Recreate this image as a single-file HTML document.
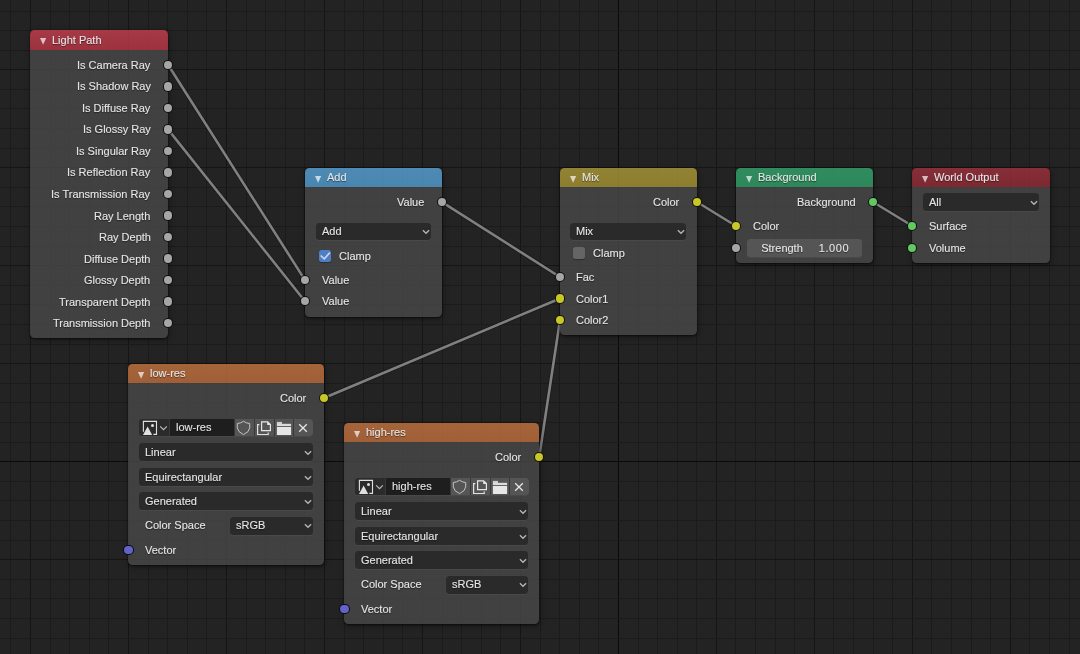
<!DOCTYPE html><html><head><meta charset="utf-8"><style>
html,body{margin:0;padding:0;}
.t{will-change:transform;-webkit-text-stroke:0.2px rgba(230,230,230,0.6);}
body{width:1080px;height:654px;overflow:hidden;position:relative;background:#232323;font-family:"Liberation Sans",sans-serif;}
.t{position:absolute;white-space:nowrap;line-height:normal;font-size:11px;text-shadow:0 1px 1px rgba(0,0,0,0.5);}
.bd{position:absolute;left:0;right:0;bottom:0;background:rgba(72,72,72,0.8);}
.node{position:absolute;border-radius:4.5px;box-shadow:0 0 1px rgba(0,0,0,0.7),0 1px 2px rgba(0,0,0,0.45),1px 2px 6px rgba(0,0,0,0.35);overflow:hidden;}
.hd{position:absolute;left:0;top:0;right:0;}
.sk{position:absolute;width:10.4px;height:10.4px;border-radius:50%;box-sizing:border-box;border:1px solid rgba(0,0,0,0.9);}
.tri,.ic{position:absolute;overflow:visible;}
.dd{position:absolute;border-radius:3.5px;box-shadow:0 1px 0 rgba(255,255,255,0.045);}
.cb{position:absolute;width:12px;height:12px;border-radius:2.5px;box-shadow:0 1px 1px rgba(0,0,0,0.3);}
svg.full{position:absolute;left:0;top:0;}
</style></head><body>
<svg class="full" width="1080" height="654" viewBox="0 0 1080 654" shape-rendering="crispEdges"><rect x="10" y="0" width="1" height="654" fill="#1b1b1b"/><rect x="30" y="0" width="1" height="654" fill="#151515"/><rect x="50" y="0" width="1" height="654" fill="#1b1b1b"/><rect x="69" y="0" width="1" height="654" fill="#1b1b1b"/><rect x="89" y="0" width="1" height="654" fill="#1b1b1b"/><rect x="108" y="0" width="1" height="654" fill="#1b1b1b"/><rect x="128" y="0" width="1" height="654" fill="#151515"/><rect x="148" y="0" width="1" height="654" fill="#1b1b1b"/><rect x="167" y="0" width="1" height="654" fill="#1b1b1b"/><rect x="187" y="0" width="1" height="654" fill="#1b1b1b"/><rect x="206" y="0" width="1" height="654" fill="#1b1b1b"/><rect x="226" y="0" width="1" height="654" fill="#151515"/><rect x="246" y="0" width="1" height="654" fill="#1b1b1b"/><rect x="265" y="0" width="1" height="654" fill="#1b1b1b"/><rect x="285" y="0" width="1" height="654" fill="#1b1b1b"/><rect x="304" y="0" width="1" height="654" fill="#1b1b1b"/><rect x="324" y="0" width="1" height="654" fill="#151515"/><rect x="344" y="0" width="1" height="654" fill="#1b1b1b"/><rect x="363" y="0" width="1" height="654" fill="#1b1b1b"/><rect x="383" y="0" width="1" height="654" fill="#1b1b1b"/><rect x="402" y="0" width="1" height="654" fill="#1b1b1b"/><rect x="422" y="0" width="1" height="654" fill="#151515"/><rect x="442" y="0" width="1" height="654" fill="#1b1b1b"/><rect x="461" y="0" width="1" height="654" fill="#1b1b1b"/><rect x="481" y="0" width="1" height="654" fill="#1b1b1b"/><rect x="500" y="0" width="1" height="654" fill="#1b1b1b"/><rect x="520" y="0" width="1" height="654" fill="#151515"/><rect x="540" y="0" width="1" height="654" fill="#1b1b1b"/><rect x="559" y="0" width="1" height="654" fill="#1b1b1b"/><rect x="579" y="0" width="1" height="654" fill="#1b1b1b"/><rect x="598" y="0" width="1" height="654" fill="#1b1b1b"/><rect x="618" y="0" width="1" height="654" fill="#0b0b0b"/><rect x="638" y="0" width="1" height="654" fill="#1b1b1b"/><rect x="657" y="0" width="1" height="654" fill="#1b1b1b"/><rect x="677" y="0" width="1" height="654" fill="#1b1b1b"/><rect x="696" y="0" width="1" height="654" fill="#1b1b1b"/><rect x="716" y="0" width="1" height="654" fill="#151515"/><rect x="735" y="0" width="1" height="654" fill="#1b1b1b"/><rect x="755" y="0" width="1" height="654" fill="#1b1b1b"/><rect x="775" y="0" width="1" height="654" fill="#1b1b1b"/><rect x="794" y="0" width="1" height="654" fill="#1b1b1b"/><rect x="814" y="0" width="1" height="654" fill="#151515"/><rect x="833" y="0" width="1" height="654" fill="#1b1b1b"/><rect x="853" y="0" width="1" height="654" fill="#1b1b1b"/><rect x="873" y="0" width="1" height="654" fill="#1b1b1b"/><rect x="892" y="0" width="1" height="654" fill="#1b1b1b"/><rect x="912" y="0" width="1" height="654" fill="#151515"/><rect x="931" y="0" width="1" height="654" fill="#1b1b1b"/><rect x="951" y="0" width="1" height="654" fill="#1b1b1b"/><rect x="971" y="0" width="1" height="654" fill="#1b1b1b"/><rect x="990" y="0" width="1" height="654" fill="#1b1b1b"/><rect x="1010" y="0" width="1" height="654" fill="#151515"/><rect x="1029" y="0" width="1" height="654" fill="#1b1b1b"/><rect x="1049" y="0" width="1" height="654" fill="#1b1b1b"/><rect x="1069" y="0" width="1" height="654" fill="#1b1b1b"/><rect x="0" y="11" width="1080" height="1" fill="#1b1b1b"/><rect x="0" y="30" width="1080" height="1" fill="#1b1b1b"/><rect x="0" y="50" width="1080" height="1" fill="#1b1b1b"/><rect x="0" y="69" width="1080" height="1" fill="#151515"/><rect x="0" y="89" width="1080" height="1" fill="#1b1b1b"/><rect x="0" y="108" width="1080" height="1" fill="#1b1b1b"/><rect x="0" y="128" width="1080" height="1" fill="#1b1b1b"/><rect x="0" y="148" width="1080" height="1" fill="#1b1b1b"/><rect x="0" y="167" width="1080" height="1" fill="#151515"/><rect x="0" y="187" width="1080" height="1" fill="#1b1b1b"/><rect x="0" y="206" width="1080" height="1" fill="#1b1b1b"/><rect x="0" y="226" width="1080" height="1" fill="#1b1b1b"/><rect x="0" y="246" width="1080" height="1" fill="#1b1b1b"/><rect x="0" y="265" width="1080" height="1" fill="#151515"/><rect x="0" y="285" width="1080" height="1" fill="#1b1b1b"/><rect x="0" y="304" width="1080" height="1" fill="#1b1b1b"/><rect x="0" y="324" width="1080" height="1" fill="#1b1b1b"/><rect x="0" y="344" width="1080" height="1" fill="#1b1b1b"/><rect x="0" y="363" width="1080" height="1" fill="#151515"/><rect x="0" y="383" width="1080" height="1" fill="#1b1b1b"/><rect x="0" y="402" width="1080" height="1" fill="#1b1b1b"/><rect x="0" y="422" width="1080" height="1" fill="#1b1b1b"/><rect x="0" y="442" width="1080" height="1" fill="#1b1b1b"/><rect x="0" y="461" width="1080" height="1" fill="#0b0b0b"/><rect x="0" y="481" width="1080" height="1" fill="#1b1b1b"/><rect x="0" y="500" width="1080" height="1" fill="#1b1b1b"/><rect x="0" y="520" width="1080" height="1" fill="#1b1b1b"/><rect x="0" y="540" width="1080" height="1" fill="#1b1b1b"/><rect x="0" y="559" width="1080" height="1" fill="#151515"/><rect x="0" y="579" width="1080" height="1" fill="#1b1b1b"/><rect x="0" y="598" width="1080" height="1" fill="#1b1b1b"/><rect x="0" y="618" width="1080" height="1" fill="#1b1b1b"/><rect x="0" y="638" width="1080" height="1" fill="#1b1b1b"/></svg>
<svg class="full" width="1080" height="654" viewBox="0 0 1080 654"><line x1="168" y1="64.8" x2="305" y2="280.1" stroke="rgba(0,0,0,0.25)" stroke-width="4.2"/><line x1="168" y1="64.8" x2="305" y2="280.1" stroke="#808080" stroke-width="2.6"/><line x1="168" y1="129.4" x2="305" y2="301.2" stroke="rgba(0,0,0,0.25)" stroke-width="4.2"/><line x1="168" y1="129.4" x2="305" y2="301.2" stroke="#808080" stroke-width="2.6"/><line x1="442" y1="202.2" x2="560" y2="277" stroke="rgba(0,0,0,0.25)" stroke-width="4.2"/><line x1="442" y1="202.2" x2="560" y2="277" stroke="#808080" stroke-width="2.6"/><line x1="324" y1="398" x2="560" y2="298.5" stroke="rgba(0,0,0,0.25)" stroke-width="4.2"/><line x1="324" y1="398" x2="560" y2="298.5" stroke="#808080" stroke-width="2.6"/><line x1="539.2" y1="457" x2="560" y2="320" stroke="rgba(0,0,0,0.25)" stroke-width="4.2"/><line x1="539.2" y1="457" x2="560" y2="320" stroke="#808080" stroke-width="2.6"/><line x1="697" y1="202" x2="736" y2="226" stroke="rgba(0,0,0,0.25)" stroke-width="4.2"/><line x1="697" y1="202" x2="736" y2="226" stroke="#808080" stroke-width="2.6"/><line x1="873" y1="202" x2="912.5" y2="226" stroke="rgba(0,0,0,0.25)" stroke-width="4.2"/><line x1="873" y1="202" x2="912.5" y2="226" stroke="#808080" stroke-width="2.6"/></svg>
<div class="node" style="left:30px;top:30px;width:138px;height:308.4px"><div class="hd" style="height:20px;background:linear-gradient(rgba(199,64,80,0.8),rgba(186,54,69,0.8))"></div><div class="bd" style="top:20px"></div></div>
<svg class="tri" style="left:40.00px;top:38.20px" width="7" height="7" viewBox="0 0 7 7"><path d="M0 0.1 L6.2 0.1 L3.1 6.7 Z" fill="rgba(255,255,255,0.68)"/></svg>
<div class="t" style="left:51.80px;top:34.00px;color:#e6e6e6;font-size:11px;text-shadow:0 1px 1px rgba(0,0,0,0.55)">Light Path</div>
<div class="t" style="right:929.50px;top:58.80px;color:#e6e6e6;font-size:11px;">Is Camera Ray</div>
<div class="sk" style="left:162.80px;top:59.60px;background:#a6a6a6"></div>
<div class="t" style="right:929.50px;top:80.33px;color:#e6e6e6;font-size:11px;">Is Shadow Ray</div>
<div class="sk" style="left:162.80px;top:81.13px;background:#a6a6a6"></div>
<div class="t" style="right:929.50px;top:101.86px;color:#e6e6e6;font-size:11px;">Is Diffuse Ray</div>
<div class="sk" style="left:162.80px;top:102.66px;background:#a6a6a6"></div>
<div class="t" style="right:929.50px;top:123.39px;color:#e6e6e6;font-size:11px;">Is Glossy Ray</div>
<div class="sk" style="left:162.80px;top:124.19px;background:#a6a6a6"></div>
<div class="t" style="right:929.50px;top:144.92px;color:#e6e6e6;font-size:11px;">Is Singular Ray</div>
<div class="sk" style="left:162.80px;top:145.72px;background:#a6a6a6"></div>
<div class="t" style="right:929.50px;top:166.45px;color:#e6e6e6;font-size:11px;">Is Reflection Ray</div>
<div class="sk" style="left:162.80px;top:167.25px;background:#a6a6a6"></div>
<div class="t" style="right:929.50px;top:187.98px;color:#e6e6e6;font-size:11px;">Is Transmission Ray</div>
<div class="sk" style="left:162.80px;top:188.78px;background:#a6a6a6"></div>
<div class="t" style="right:929.50px;top:209.51px;color:#e6e6e6;font-size:11px;">Ray Length</div>
<div class="sk" style="left:162.80px;top:210.31px;background:#a6a6a6"></div>
<div class="t" style="right:929.50px;top:231.04px;color:#e6e6e6;font-size:11px;">Ray Depth</div>
<div class="sk" style="left:162.80px;top:231.84px;background:#a6a6a6"></div>
<div class="t" style="right:929.50px;top:252.57px;color:#e6e6e6;font-size:11px;">Diffuse Depth</div>
<div class="sk" style="left:162.80px;top:253.37px;background:#a6a6a6"></div>
<div class="t" style="right:929.50px;top:274.10px;color:#e6e6e6;font-size:11px;">Glossy Depth</div>
<div class="sk" style="left:162.80px;top:274.90px;background:#a6a6a6"></div>
<div class="t" style="right:929.50px;top:295.63px;color:#e6e6e6;font-size:11px;">Transparent Depth</div>
<div class="sk" style="left:162.80px;top:296.43px;background:#a6a6a6"></div>
<div class="t" style="right:929.50px;top:317.16px;color:#e6e6e6;font-size:11px;">Transmission Depth</div>
<div class="sk" style="left:162.80px;top:317.96px;background:#a6a6a6"></div>
<div class="node" style="left:305px;top:168px;width:137px;height:148.60000000000002px"><div class="hd" style="height:19px;background:linear-gradient(rgba(89,164,216,0.8),rgba(81,159,211,0.8))"></div><div class="bd" style="top:19px"></div></div>
<svg class="tri" style="left:315.00px;top:175.50px" width="7" height="7" viewBox="0 0 7 7"><path d="M0 0.1 L6.2 0.1 L3.1 6.7 Z" fill="rgba(255,255,255,0.68)"/></svg>
<div class="t" style="left:326.80px;top:171.30px;color:#e6e6e6;font-size:11px;text-shadow:0 1px 1px rgba(0,0,0,0.55)">Add</div>
<div class="t" style="right:655.50px;top:196.20px;color:#e6e6e6;font-size:11px;">Value</div>
<div class="sk" style="left:436.80px;top:197.00px;background:#a6a6a6"></div>
<div class="dd" style="left:316px;top:223px;width:115px;height:17px;background:#2a2a2a"></div>
<div class="t" style="left:322.00px;top:225.10px;color:#e6e6e6;font-size:11px;">Add</div>
<svg class="ic" style="left:420.70px;top:228.00px" width="10" height="8" viewBox="0 0 10 8"><path d="M1.9 2.3 L5 5.3 L8.1 2.2" fill="none" stroke="#b4b4b4" stroke-width="1.4"/></svg>
<div class="cb" style="left:319px;top:250px;background:#4e7ec4"></div>
<svg class="ic" style="left:319px;top:250px" width="12" height="12" viewBox="0 0 12 12"><path d="M1.6 5.5 L5.3 8.9 L10.8 2.6" fill="none" stroke="rgba(235,240,250,0.78)" stroke-width="1.6"/></svg>
<div class="t" style="left:338.80px;top:250.00px;color:#e6e6e6;font-size:11px;">Clamp</div>
<div class="t" style="left:321.80px;top:274.10px;color:#e6e6e6;font-size:11px;">Value</div>
<div class="sk" style="left:299.80px;top:274.90px;background:#a6a6a6"></div>
<div class="t" style="left:321.80px;top:295.20px;color:#e6e6e6;font-size:11px;">Value</div>
<div class="sk" style="left:299.80px;top:296.00px;background:#a6a6a6"></div>
<div class="node" style="left:560px;top:168px;width:137px;height:167px"><div class="hd" style="height:19px;background:linear-gradient(rgba(174,154,56,0.8),rgba(166,148,51,0.8))"></div><div class="bd" style="top:19px"></div></div>
<svg class="tri" style="left:570.00px;top:175.50px" width="7" height="7" viewBox="0 0 7 7"><path d="M0 0.1 L6.2 0.1 L3.1 6.7 Z" fill="rgba(255,255,255,0.68)"/></svg>
<div class="t" style="left:581.80px;top:171.30px;color:#e6e6e6;font-size:11px;text-shadow:0 1px 1px rgba(0,0,0,0.55)">Mix</div>
<div class="t" style="right:400.50px;top:196.00px;color:#e6e6e6;font-size:11px;">Color</div>
<div class="sk" style="left:691.80px;top:196.80px;background:#c7c729"></div>
<div class="dd" style="left:570px;top:223px;width:116px;height:17px;background:#2a2a2a"></div>
<div class="t" style="left:576.00px;top:225.10px;color:#e6e6e6;font-size:11px;">Mix</div>
<svg class="ic" style="left:675.70px;top:228.00px" width="10" height="8" viewBox="0 0 10 8"><path d="M1.9 2.3 L5 5.3 L8.1 2.2" fill="none" stroke="#b4b4b4" stroke-width="1.4"/></svg>
<div class="cb" style="left:573px;top:247px;background:#656565"></div>
<div class="t" style="left:592.80px;top:247.30px;color:#e6e6e6;font-size:11px;">Clamp</div>
<div class="t" style="left:575.80px;top:271.00px;color:#e6e6e6;font-size:11px;">Fac</div>
<div class="sk" style="left:554.80px;top:271.80px;background:#a6a6a6"></div>
<div class="t" style="left:575.80px;top:292.50px;color:#e6e6e6;font-size:11px;">Color1</div>
<div class="sk" style="left:554.80px;top:293.30px;background:#c7c729"></div>
<div class="t" style="left:575.80px;top:314.00px;color:#e6e6e6;font-size:11px;">Color2</div>
<div class="sk" style="left:554.80px;top:314.80px;background:#c7c729"></div>
<div class="node" style="left:736px;top:168px;width:137px;height:95px"><div class="hd" style="height:19px;background:linear-gradient(rgba(51,166,109,0.8),rgba(48,160,104,0.8))"></div><div class="bd" style="top:19px"></div></div>
<svg class="tri" style="left:746.00px;top:175.50px" width="7" height="7" viewBox="0 0 7 7"><path d="M0 0.1 L6.2 0.1 L3.1 6.7 Z" fill="rgba(255,255,255,0.68)"/></svg>
<div class="t" style="left:757.80px;top:171.30px;color:#e6e6e6;font-size:11px;text-shadow:0 1px 1px rgba(0,0,0,0.55)">Background</div>
<div class="t" style="right:224.50px;top:196.00px;color:#e6e6e6;font-size:11px;">Background</div>
<div class="sk" style="left:867.80px;top:196.80px;background:#63c763"></div>
<div class="t" style="left:752.80px;top:220.00px;color:#e6e6e6;font-size:11px;">Color</div>
<div class="sk" style="left:730.80px;top:220.80px;background:#c7c729"></div>
<div class="dd" style="left:747px;top:239px;width:115px;height:18px;background:#555555"></div>
<div class="t" style="left:682.00px;width:200px;text-align:center;top:242.20px;color:#e6e6e6;font-size:11px;">Strength</div>
<div class="t" style="left:734.00px;width:200px;text-align:center;top:242.20px;color:#e6e6e6;font-size:11px;letter-spacing:0.6px">1.000</div>
<div class="sk" style="left:730.80px;top:242.80px;background:#a6a6a6"></div>
<div class="node" style="left:912px;top:168px;width:138px;height:95px"><div class="hd" style="height:19px;background:linear-gradient(rgba(159,50,61,0.8),rgba(148,41,54,0.8))"></div><div class="bd" style="top:19px"></div></div>
<svg class="tri" style="left:922.00px;top:175.50px" width="7" height="7" viewBox="0 0 7 7"><path d="M0 0.1 L6.2 0.1 L3.1 6.7 Z" fill="rgba(255,255,255,0.68)"/></svg>
<div class="t" style="left:933.80px;top:171.30px;color:#e6e6e6;font-size:11px;text-shadow:0 1px 1px rgba(0,0,0,0.55)">World Output</div>
<div class="dd" style="left:923px;top:193px;width:116px;height:18px;background:#2a2a2a"></div>
<div class="t" style="left:929.00px;top:195.60px;color:#e6e6e6;font-size:11px;">All</div>
<svg class="ic" style="left:1028.70px;top:198.50px" width="10" height="8" viewBox="0 0 10 8"><path d="M1.9 2.3 L5 5.3 L8.1 2.2" fill="none" stroke="#b4b4b4" stroke-width="1.4"/></svg>
<div class="t" style="left:928.60px;top:220.00px;color:#e6e6e6;font-size:11px;">Surface</div>
<div class="sk" style="left:907.10px;top:220.80px;background:#63c763"></div>
<div class="t" style="left:928.60px;top:242.00px;color:#e6e6e6;font-size:11px;">Volume</div>
<div class="sk" style="left:907.10px;top:242.80px;background:#63c763"></div>
<div class="node" style="left:128px;top:364px;width:196px;height:201px"><div class="hd" style="height:19px;background:linear-gradient(rgba(198,116,64,0.8),rgba(191,110,60,0.8))"></div><div class="bd" style="top:19px"></div></div>
<svg class="tri" style="left:138.00px;top:371.50px" width="7" height="7" viewBox="0 0 7 7"><path d="M0 0.1 L6.2 0.1 L3.1 6.7 Z" fill="rgba(255,255,255,0.68)"/></svg>
<div class="t" style="left:149.80px;top:367.30px;color:#e6e6e6;font-size:11px;text-shadow:0 1px 1px rgba(0,0,0,0.55)">low-res</div>
<div class="t" style="right:773.50px;top:392.00px;color:#e6e6e6;font-size:11px;">Color</div>
<div class="sk" style="left:318.80px;top:392.80px;background:#c7c729"></div>
<div class="dd" style="left:139px;top:419px;width:174px;height:17px;background:#383838;border-radius:3.5px"></div>
<div class="dd" style="left:139px;top:419px;width:30px;height:17px;background:#2b2b2b;border-radius:3.5px 0 0 3.5px;box-shadow:none"></div>
<div class="dd" style="left:170px;top:419px;width:64px;height:17px;background:#1e1e1e;border-radius:0;box-shadow:none"></div>
<div class="dd" style="left:235px;top:419px;width:19px;height:17px;background:#555555;border-radius:0;box-shadow:none"></div>
<div class="dd" style="left:255px;top:419px;width:19px;height:17px;background:#555555;border-radius:0;box-shadow:none"></div>
<div class="dd" style="left:275px;top:419px;width:18px;height:17px;background:#555555;border-radius:0;box-shadow:none"></div>
<div class="dd" style="left:294px;top:419px;width:19px;height:17px;background:#555555;border-radius:0 3.5px 3.5px 0;box-shadow:none"></div>
<div class="t" style="left:176.30px;top:420.80px;color:#e6e6e6;font-size:11px;">low-res</div>
<svg class="ic" style="left:136px;top:414px" width="180" height="26" viewBox="136 414 180 26"><path d="M143.4 431.8 V421.4 H156.5 V434.4 H153.4" fill="none" stroke="#e0e0e0" stroke-width="1.1"/><path d="M143 434.9 L147.6 426.6 L152.2 434.9 Z" fill="#e0e0e0"/><circle cx="152.5" cy="425.5" r="1.5" fill="#e0e0e0"/><path d="M160.2 426.4 L163.5 429.6 L166.8 426.4" fill="none" stroke="#bdbdbd" stroke-width="1.2"/><path d="M243.5 421.3 Q240.5 423.4 237.3 423.5 V427.8 Q237.6 432 243.5 434.6 Q249.4 432 249.7 427.8 V423.5 Q246.5 423.4 243.5 421.3 Z" fill="none" stroke="#c4c4c4" stroke-width="1"/><path d="M259.4 424.6 H257.6 V434.5 H268.2 V432.6" fill="none" stroke="#e0e0e0" stroke-width="1.2"/><path d="M261.6 421.8 H267.6 L270.4 424.6 V430.6 H261.6 Z" fill="none" stroke="#e6e6e6" stroke-width="1.2"/><path d="M267.2 421.4 L270.8 425 H267.2 Z" fill="#e6e6e6"/><rect x="276.9" y="421.9" width="5.1" height="2.2" fill="#cfcfcf"/><rect x="276.9" y="423.8" width="14.2" height="2.2" fill="#dcdcdc"/><rect x="276.9" y="426.9" width="14.2" height="8.1" fill="#e6e6e6"/><path d="M299.2 424.2 L306.8 431.8 M306.8 424.2 L299.2 431.8" stroke="#e6e6e6" stroke-width="1.3"/></svg>
<div class="dd" style="left:139px;top:443px;width:174px;height:18px;background:#2a2a2a"></div>
<div class="t" style="left:145.00px;top:445.60px;color:#e6e6e6;font-size:11px;">Linear</div>
<svg class="ic" style="left:302.70px;top:448.50px" width="10" height="8" viewBox="0 0 10 8"><path d="M1.9 2.3 L5 5.3 L8.1 2.2" fill="none" stroke="#b4b4b4" stroke-width="1.4"/></svg>
<div class="dd" style="left:139px;top:468px;width:174px;height:18px;background:#2a2a2a"></div>
<div class="t" style="left:145.00px;top:470.60px;color:#e6e6e6;font-size:11px;">Equirectangular</div>
<svg class="ic" style="left:302.70px;top:473.50px" width="10" height="8" viewBox="0 0 10 8"><path d="M1.9 2.3 L5 5.3 L8.1 2.2" fill="none" stroke="#b4b4b4" stroke-width="1.4"/></svg>
<div class="dd" style="left:139px;top:492.4px;width:174px;height:18.0px;background:#2a2a2a"></div>
<div class="t" style="left:145.00px;top:495.00px;color:#e6e6e6;font-size:11px;">Generated</div>
<svg class="ic" style="left:302.70px;top:497.90px" width="10" height="8" viewBox="0 0 10 8"><path d="M1.9 2.3 L5 5.3 L8.1 2.2" fill="none" stroke="#b4b4b4" stroke-width="1.4"/></svg>
<div class="t" style="left:145.30px;top:519.00px;color:#e6e6e6;font-size:11px;">Color Space</div>
<div class="dd" style="left:230px;top:516.5px;width:83px;height:18.0px;background:#2a2a2a"></div>
<div class="t" style="left:236.00px;top:519.10px;color:#e6e6e6;font-size:11px;">sRGB</div>
<svg class="ic" style="left:302.70px;top:522.00px" width="10" height="8" viewBox="0 0 10 8"><path d="M1.9 2.3 L5 5.3 L8.1 2.2" fill="none" stroke="#b4b4b4" stroke-width="1.4"/></svg>
<div class="t" style="left:145.30px;top:544.00px;color:#e6e6e6;font-size:11px;">Vector</div>
<div class="sk" style="left:123.30px;top:544.80px;background:#6363c7"></div>
<div class="node" style="left:344px;top:423px;width:195px;height:201px"><div class="hd" style="height:19px;background:linear-gradient(rgba(198,116,64,0.8),rgba(191,110,60,0.8))"></div><div class="bd" style="top:19px"></div></div>
<svg class="tri" style="left:354.00px;top:430.50px" width="7" height="7" viewBox="0 0 7 7"><path d="M0 0.1 L6.2 0.1 L3.1 6.7 Z" fill="rgba(255,255,255,0.68)"/></svg>
<div class="t" style="left:365.80px;top:426.30px;color:#e6e6e6;font-size:11px;text-shadow:0 1px 1px rgba(0,0,0,0.55)">high-res</div>
<div class="t" style="right:558.50px;top:451.00px;color:#e6e6e6;font-size:11px;">Color</div>
<div class="sk" style="left:533.80px;top:451.80px;background:#c7c729"></div>
<div class="dd" style="left:355px;top:478px;width:174px;height:17px;background:#383838;border-radius:3.5px"></div>
<div class="dd" style="left:355px;top:478px;width:30px;height:17px;background:#2b2b2b;border-radius:3.5px 0 0 3.5px;box-shadow:none"></div>
<div class="dd" style="left:386px;top:478px;width:64px;height:17px;background:#1e1e1e;border-radius:0;box-shadow:none"></div>
<div class="dd" style="left:451px;top:478px;width:19px;height:17px;background:#555555;border-radius:0;box-shadow:none"></div>
<div class="dd" style="left:471px;top:478px;width:19px;height:17px;background:#555555;border-radius:0;box-shadow:none"></div>
<div class="dd" style="left:491px;top:478px;width:18px;height:17px;background:#555555;border-radius:0;box-shadow:none"></div>
<div class="dd" style="left:510px;top:478px;width:19px;height:17px;background:#555555;border-radius:0 3.5px 3.5px 0;box-shadow:none"></div>
<div class="t" style="left:392.30px;top:479.80px;color:#e6e6e6;font-size:11px;">high-res</div>
<svg class="ic" style="left:352px;top:473px" width="180" height="26" viewBox="136 414 180 26"><path d="M143.4 431.8 V421.4 H156.5 V434.4 H153.4" fill="none" stroke="#e0e0e0" stroke-width="1.1"/><path d="M143 434.9 L147.6 426.6 L152.2 434.9 Z" fill="#e0e0e0"/><circle cx="152.5" cy="425.5" r="1.5" fill="#e0e0e0"/><path d="M160.2 426.4 L163.5 429.6 L166.8 426.4" fill="none" stroke="#bdbdbd" stroke-width="1.2"/><path d="M243.5 421.3 Q240.5 423.4 237.3 423.5 V427.8 Q237.6 432 243.5 434.6 Q249.4 432 249.7 427.8 V423.5 Q246.5 423.4 243.5 421.3 Z" fill="none" stroke="#c4c4c4" stroke-width="1"/><path d="M259.4 424.6 H257.6 V434.5 H268.2 V432.6" fill="none" stroke="#e0e0e0" stroke-width="1.2"/><path d="M261.6 421.8 H267.6 L270.4 424.6 V430.6 H261.6 Z" fill="none" stroke="#e6e6e6" stroke-width="1.2"/><path d="M267.2 421.4 L270.8 425 H267.2 Z" fill="#e6e6e6"/><rect x="276.9" y="421.9" width="5.1" height="2.2" fill="#cfcfcf"/><rect x="276.9" y="423.8" width="14.2" height="2.2" fill="#dcdcdc"/><rect x="276.9" y="426.9" width="14.2" height="8.1" fill="#e6e6e6"/><path d="M299.2 424.2 L306.8 431.8 M306.8 424.2 L299.2 431.8" stroke="#e6e6e6" stroke-width="1.3"/></svg>
<div class="dd" style="left:355px;top:502px;width:173px;height:18px;background:#2a2a2a"></div>
<div class="t" style="left:361.00px;top:504.60px;color:#e6e6e6;font-size:11px;">Linear</div>
<svg class="ic" style="left:517.70px;top:507.50px" width="10" height="8" viewBox="0 0 10 8"><path d="M1.9 2.3 L5 5.3 L8.1 2.2" fill="none" stroke="#b4b4b4" stroke-width="1.4"/></svg>
<div class="dd" style="left:355px;top:527px;width:173px;height:18px;background:#2a2a2a"></div>
<div class="t" style="left:361.00px;top:529.60px;color:#e6e6e6;font-size:11px;">Equirectangular</div>
<svg class="ic" style="left:517.70px;top:532.50px" width="10" height="8" viewBox="0 0 10 8"><path d="M1.9 2.3 L5 5.3 L8.1 2.2" fill="none" stroke="#b4b4b4" stroke-width="1.4"/></svg>
<div class="dd" style="left:355px;top:551.4px;width:173px;height:18.0px;background:#2a2a2a"></div>
<div class="t" style="left:361.00px;top:554.00px;color:#e6e6e6;font-size:11px;">Generated</div>
<svg class="ic" style="left:517.70px;top:556.90px" width="10" height="8" viewBox="0 0 10 8"><path d="M1.9 2.3 L5 5.3 L8.1 2.2" fill="none" stroke="#b4b4b4" stroke-width="1.4"/></svg>
<div class="t" style="left:361.30px;top:578.00px;color:#e6e6e6;font-size:11px;">Color Space</div>
<div class="dd" style="left:446px;top:575.5px;width:82px;height:18.0px;background:#2a2a2a"></div>
<div class="t" style="left:452.00px;top:578.10px;color:#e6e6e6;font-size:11px;">sRGB</div>
<svg class="ic" style="left:517.70px;top:581.00px" width="10" height="8" viewBox="0 0 10 8"><path d="M1.9 2.3 L5 5.3 L8.1 2.2" fill="none" stroke="#b4b4b4" stroke-width="1.4"/></svg>
<div class="t" style="left:361.30px;top:603.00px;color:#e6e6e6;font-size:11px;">Vector</div>
<div class="sk" style="left:339.30px;top:603.80px;background:#6363c7"></div>
</body></html>
